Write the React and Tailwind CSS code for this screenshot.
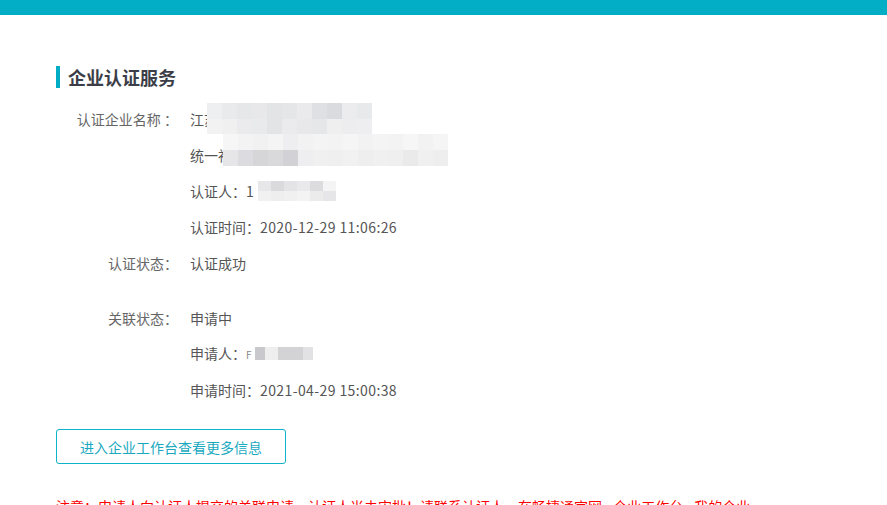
import React from "react";

function Mosaic({ rows, cell = 15, h = 15 }) {
  return (
    <div className="flex flex-col">
      {rows.map((r, i) => (
        <div key={i} className="flex">
          {r.map((c, j) => (
            <div key={j} style={{ background: c, width: cell, height: h }} />
          ))}
        </div>
      ))}
    </div>
  );
}

const m1 = [
  ["#eeeff0", "#e9eaec", "#e6e7e9", "#e8e8ea", "#e3e4e6", "#e5e6e8", "#eaeaec", "#dfe0e3", "#dadbde", "#ececee", "#e8e9eb", "#ffffff"],
  ["#f2f2f3", "#f0f0f1", "#ebebed", "#e9eaec", "#e3e4e6", "#ebebed", "#e8e8ea", "#e6e7e9", "#efeff0", "#ededef", "#eeeef0", "#ffffff"],
];
const m2 = [
  ["#f6f6f7", "#f3f3f4", "#f1f1f2", "#f4f4f5", "#eeeef0", "#f2f2f3", "#f4f4f5", "#f3f3f4", "#f5f5f6", "#f2f2f3", "#f4f4f5", "#f3f3f4", "#f6f6f7", "#f2f2f3", "#f5f5f6"],
  ["#e6e6e9", "#dcdbdf", "#d6d6d9", "#d9d9dc", "#d2d2d6", "#eeeef0", "#f0f0f1", "#efeff0", "#f1f1f2", "#eeeeef", "#f0f0f1", "#efeff0", "#eaeaeb", "#f0f0f1", "#eeeeef"],
];

function Row({ label, children, labelClass = "" }) {
  return (
    <div className="flex h-[36px] items-center">
      <div className={"w-[122px] shrink-0 text-right text-[#666] " + labelClass}>{label}</div>
      <div className="relative ml-[12px] flex-1 whitespace-nowrap text-[#555]">{children}</div>
    </div>
  );
}

export default function App() {
  return (
    <div
      className="min-h-[505px] w-[887px] overflow-hidden bg-white text-[14px] leading-[36px]"
      style={{ fontFamily: '"Noto Sans CJK SC", "Noto Sans", sans-serif' }}
    >
      <div className="h-[15px] bg-[#02aec6]" />
      <div className="pl-[56px]">
        <div className="mt-[51px] flex h-[22px] items-center">
          <div className="h-[22px] w-[4px] bg-[#00adc4]" />
          <div className="ml-[8px] text-[18px] font-bold leading-[22px] text-[#3b3e48]">企业认证服务</div>
        </div>

        <div className="mt-[13px]">
          <Row label="认证企业名称 ：">
            <span>江苏</span>
            <div className="absolute left-[17px] top-[2px]">
              <Mosaic rows={m1} cell={15} h={15.5} />
            </div>
          </Row>
          <Row label="">
            <span>统一社会信用代码</span>
            <div className="absolute left-[33px] top-[-3px]">
              <Mosaic rows={m2} cell={15} h={16} />
            </div>
          </Row>
          <Row label="">
            <span>认证人：1</span>
            <div className="absolute left-[68px] top-[8px]">
              <Mosaic
                rows={[["#e7e7e9", "#dadadd", "#e4e4e6", "#e9e9eb", "#dcdcdf", "#f4f4f5"], ["#f1f1f2", "#eeeeef", "#f0f0f1", "#f3f3f4", "#ebebec", "#e6e6e8"]]}
                cell={13}
                h={10}
              />
            </div>
          </Row>
          <Row label="">
            认证时间：<span className="tracking-[0.4px]">2020-12-29 11:06:26</span>
          </Row>
          <Row label="认证状态：">认证成功</Row>
        </div>

        <div className="mt-[19px]">
          <Row label="关联状态：">申请中</Row>
          <Row label="">
            <span>申请人：</span>
            <span className="text-[10px] text-[#888]">F</span>
            <div className="absolute left-[65px] top-[12px] flex">
              <div className="h-[13px] w-[10px] bg-[#c9c9cd]" />
              <div className="h-[13px] w-[13px] bg-[#eeeeef]" />
              <div className="h-[13px] w-[25px] bg-[#d3d3d6]" />
              <div className="h-[13px] w-[10px] bg-[#e2e2e4]" />
            </div>
          </Row>
          <Row label="">
            申请时间：<span className="tracking-[0.4px]">2021-04-29 15:00:38</span>
          </Row>
        </div>

        <button className="mt-[21px] flex h-[35px] w-[230px] items-center justify-center rounded-[3px] border border-[#0fb2c8] bg-white text-[14px] leading-[20px] text-[#1aa9bf]">
          进入企业工作台查看更多信息
        </button>

        <div className="mt-[32px] whitespace-nowrap text-[14px] leading-[20px] text-[#ff0000]">
          注意：申请人向认证人提交的关联申请，认证人尚未审批！请联系认证人，在畅捷通官网 - 企业工作台 - 我的企业
        </div>
      </div>
    </div>
  );
}
